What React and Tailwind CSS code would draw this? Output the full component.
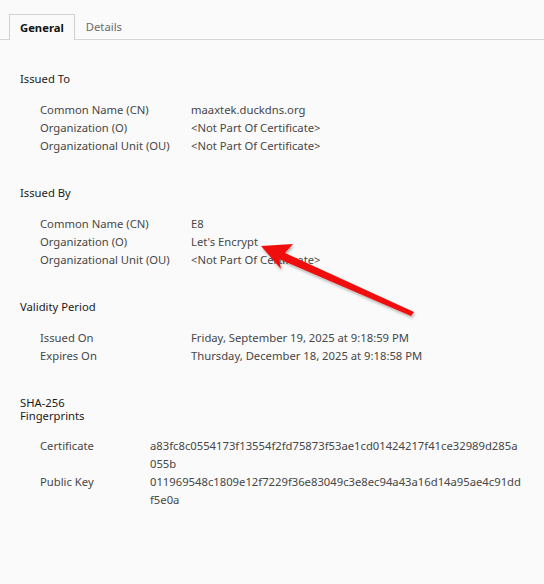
import React from 'react';

const font = { fontFamily: '"Noto Sans", "Open Sans", sans-serif' };

const Row = ({ label, value }) => (
  <div className="flex h-[18px] items-center whitespace-nowrap">
    <div className="w-[191px] shrink-0 pl-[40px] text-[#474747]">{label}</div>
    <div className="text-[#474747]">{value}</div>
  </div>
);

const Section = ({ title, className, children }) => (
  <div className={className}>
    <div className="flex h-[18px] items-center pl-[20px] text-[#1a1a1a]">{title}</div>
    <div className="mt-[13px]">{children}</div>
  </div>
);

const HashRow = ({ label, lines }) => (
  <div className="flex whitespace-nowrap">
    <div className="w-[150px] shrink-0 pl-[40px] text-[#474747]">{label}</div>
    <div className="text-[#474747]">
      {lines[0]}
      <br />
      {lines[1]}
    </div>
  </div>
);

const Arrow = () => (
  <svg className="absolute left-0 top-0 pointer-events-none" width="544" height="584">
    <defs>
      <filter id="sh" x="-20%" y="-20%" width="140%" height="140%">
        <feDropShadow dx="1" dy="2" stdDeviation="1.5" floodColor="#000" floodOpacity="0.3" />
      </filter>
    </defs>
    <polygon
      points="261,246 293,244 285,253 414,312 411,316 279,259 281,269"
      fill="#f00f0f"
      filter="url(#sh)"
    />
  </svg>
);

export default function App() {
  return (
    <div className="relative w-[544px] h-[584px] bg-[#fafafa] text-[11.25px] leading-[18px]" style={font}>
      <div className="flex pt-[14px] pl-[9px] border-b border-[#d6d6d6] h-[40px]">
        <div className="h-[26px] px-[10px] border border-b-0 border-[#d0d0d0] bg-[#fafafa] -mb-px flex items-center font-bold text-[#111]">
          General
        </div>
        <div className="h-[26px] px-[11px] flex items-center text-[#6b6b6b]">Details</div>
      </div>

      <Section title="Issued To" className="mt-[30px]">
        <Row label="Common Name (CN)" value="maaxtek.duckdns.org" />
        <Row label="Organization (O)" value="<Not Part Of Certificate>" />
        <Row label="Organizational Unit (OU)" value="<Not Part Of Certificate>" />
      </Section>

      <Section title="Issued By" className="mt-[29px]">
        <Row label="Common Name (CN)" value="E8" />
        <Row label="Organization (O)" value="Let's Encrypt" />
        <Row label="Organizational Unit (OU)" value="<Not Part Of Certificate>" />
      </Section>

      <Section title="Validity Period" className="mt-[29px]">
        <Row label="Issued On" value="Friday, September 19, 2025 at 9:18:59 PM" />
        <Row label="Expires On" value="Thursday, December 18, 2025 at 9:18:58 PM" />
      </Section>

      <div className="mt-[31px]">
        <div className="pl-[20px] leading-[13px] text-[#1a1a1a]">
          SHA-256
          <br />
          Fingerprints
        </div>
        <div className="mt-[15px]">
          <HashRow
            label="Certificate"
            lines={['a83fc8c0554173f13554f2fd75873f53ae1cd01424217f41ce32989d285a', '055b']}
          />
          <HashRow
            label="Public Key"
            lines={['011969548c1809e12f7229f36e83049c3e8ec94a43a16d14a95ae4c91dd', 'f5e0a']}
          />
        </div>
      </div>

      <Arrow />
    </div>
  );
}
